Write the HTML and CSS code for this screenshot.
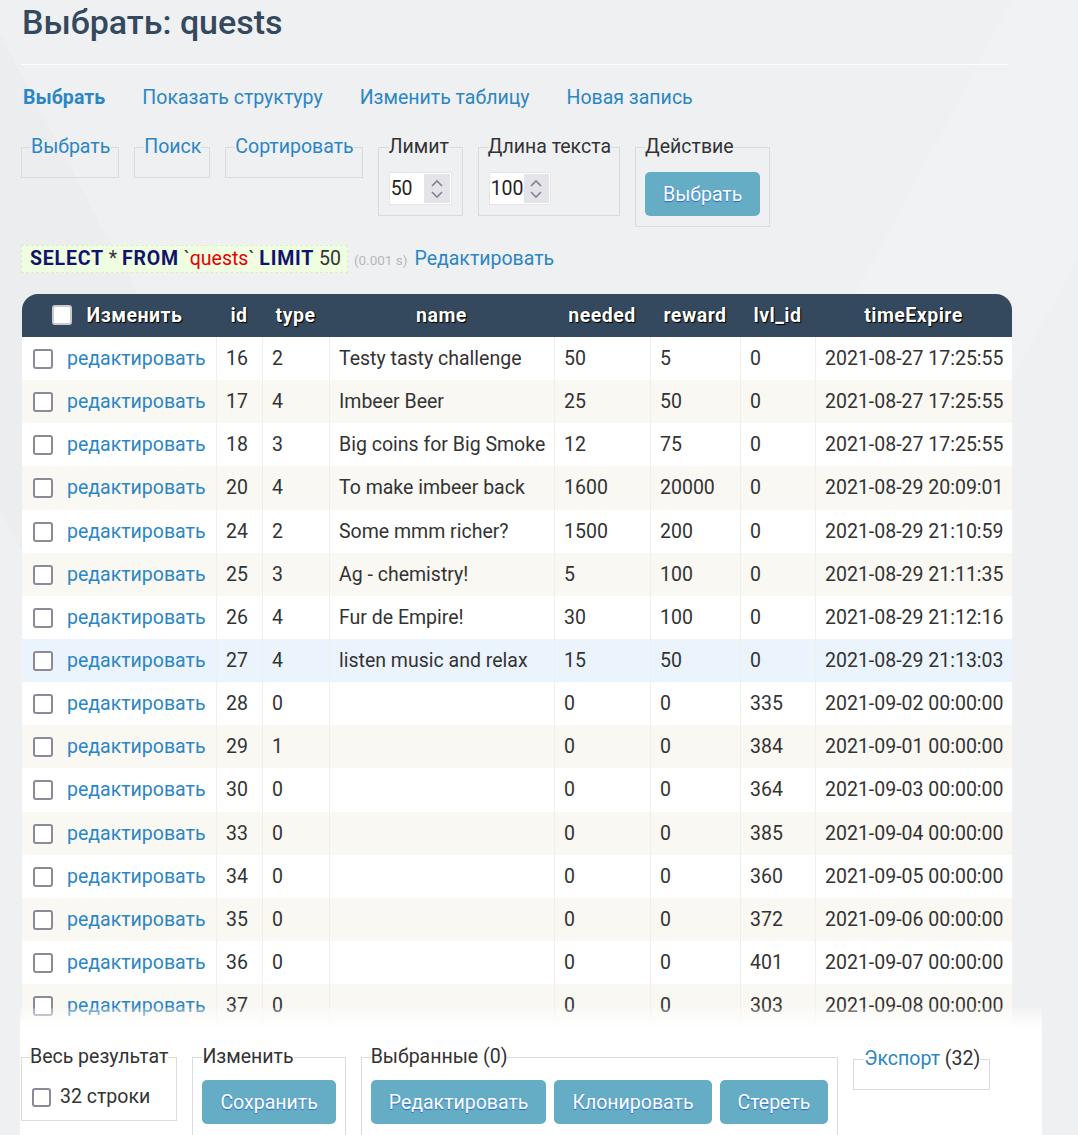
FILE: index.html
```html
<!DOCTYPE html>
<html lang="ru">
<head>
<meta charset="utf-8">
<title>Выбрать: quests</title>
<link rel="stylesheet" href="styles.css">
</head>
<body>
<div class="content">
  <h2 class="title">Выбрать: quests</h2>
  <p class="links">
    <a href="#" class="active">Выбрать</a>
    <a href="#">Показать структуру</a>
    <a href="#">Изменить таблицу</a>
    <a href="#">Новая запись</a>
  </p>
  <form class="select-form">
    <fieldset class="fs fs-empty"><legend><a href="#">Выбрать</a></legend></fieldset>
    <fieldset class="fs fs-empty"><legend><a href="#">Поиск</a></legend></fieldset>
    <fieldset class="fs fs-empty"><legend><a href="#">Сортировать</a></legend></fieldset>
    <fieldset class="fs fs-limit"><legend>Лимит</legend>
      <div class="num num-limit"><span class="num-val">50</span><span class="spin"><svg width="14" height="24" viewBox="0 0 14 24"><path d="M2 9 L7 4 L12 9 M2 15 L7 20 L12 15" fill="none" stroke="#85828f" stroke-width="1.6"/></svg></span></div>
    </fieldset>
    <fieldset class="fs fs-len"><legend>Длина текста</legend>
      <div class="num num-len"><span class="num-val">100</span><span class="spin"><svg width="14" height="24" viewBox="0 0 14 24"><path d="M2 9 L7 4 L12 9 M2 15 L7 20 L12 15" fill="none" stroke="#85828f" stroke-width="1.6"/></svg></span></div>
    </fieldset>
    <fieldset class="fs fs-action"><legend>Действие</legend>
      <button type="button" class="btn">Выбрать</button>
    </fieldset>
  </form>
  <p class="sql-line"><code class="sql"><b class="kw">SELECT</b> * <b class="kw">FROM</b> `<span class="ident">quests</span>` <b class="kw">LIMIT</b> 50</code><span class="time">(0.001 s)</span><a href="#">Редактировать</a></p>

  <table class="data">
    <colgroup>
      <col class="c1"><col class="c2"><col class="c3"><col class="c4"><col class="c5"><col class="c6"><col class="c7"><col class="c8">
    </colgroup>
    <thead>
      <tr><th class="th-first"><span class="cb cb-head"></span>Изменить</th><th>id</th><th>type</th><th>name</th><th>needed</th><th>reward</th><th>lvl_id</th><th>timeExpire</th></tr>
    </thead>
    <tbody>
      <tr><td class="ed"><span class="cb"></span><a href="#">редактировать</a></td><td>16</td><td>2</td><td>Testy tasty challenge</td><td>50</td><td>5</td><td>0</td><td>2021-08-27 17:25:55</td></tr>
      <tr><td class="ed"><span class="cb"></span><a href="#">редактировать</a></td><td>17</td><td>4</td><td>Imbeer Beer</td><td>25</td><td>50</td><td>0</td><td>2021-08-27 17:25:55</td></tr>
      <tr><td class="ed"><span class="cb"></span><a href="#">редактировать</a></td><td>18</td><td>3</td><td>Big coins for Big Smoke</td><td>12</td><td>75</td><td>0</td><td>2021-08-27 17:25:55</td></tr>
      <tr class="tall"><td class="ed"><span class="cb"></span><a href="#">редактировать</a></td><td>20</td><td>4</td><td>To make imbeer back</td><td>1600</td><td>20000</td><td>0</td><td>2021-08-29 20:09:01</td></tr>
      <tr><td class="ed"><span class="cb"></span><a href="#">редактировать</a></td><td>24</td><td>2</td><td>Some mmm richer?</td><td>1500</td><td>200</td><td>0</td><td>2021-08-29 21:10:59</td></tr>
      <tr><td class="ed"><span class="cb"></span><a href="#">редактировать</a></td><td>25</td><td>3</td><td>Ag - chemistry!</td><td>5</td><td>100</td><td>0</td><td>2021-08-29 21:11:35</td></tr>
      <tr><td class="ed"><span class="cb"></span><a href="#">редактировать</a></td><td>26</td><td>4</td><td>Fur de Empire!</td><td>30</td><td>100</td><td>0</td><td>2021-08-29 21:12:16</td></tr>
      <tr class="hover"><td class="ed"><span class="cb"></span><a href="#">редактировать</a></td><td>27</td><td>4</td><td>listen music and relax</td><td>15</td><td>50</td><td>0</td><td>2021-08-29 21:13:03</td></tr>
      <tr><td class="ed"><span class="cb"></span><a href="#">редактировать</a></td><td>28</td><td>0</td><td></td><td>0</td><td>0</td><td>335</td><td>2021-09-02 00:00:00</td></tr>
      <tr><td class="ed"><span class="cb"></span><a href="#">редактировать</a></td><td>29</td><td>1</td><td></td><td>0</td><td>0</td><td>384</td><td>2021-09-01 00:00:00</td></tr>
      <tr class="tall"><td class="ed"><span class="cb"></span><a href="#">редактировать</a></td><td>30</td><td>0</td><td></td><td>0</td><td>0</td><td>364</td><td>2021-09-03 00:00:00</td></tr>
      <tr><td class="ed"><span class="cb"></span><a href="#">редактировать</a></td><td>33</td><td>0</td><td></td><td>0</td><td>0</td><td>385</td><td>2021-09-04 00:00:00</td></tr>
      <tr><td class="ed"><span class="cb"></span><a href="#">редактировать</a></td><td>34</td><td>0</td><td></td><td>0</td><td>0</td><td>360</td><td>2021-09-05 00:00:00</td></tr>
      <tr><td class="ed"><span class="cb"></span><a href="#">редактировать</a></td><td>35</td><td>0</td><td></td><td>0</td><td>0</td><td>372</td><td>2021-09-06 00:00:00</td></tr>
      <tr><td class="ed"><span class="cb"></span><a href="#">редактировать</a></td><td>36</td><td>0</td><td></td><td>0</td><td>0</td><td>401</td><td>2021-09-07 00:00:00</td></tr>
      <tr><td class="ed"><span class="cb"></span><a href="#">редактировать</a></td><td>37</td><td>0</td><td></td><td>0</td><td>0</td><td>303</td><td>2021-09-08 00:00:00</td></tr>
    </tbody>
  </table>

  <div class="footer">
    <div class="footer-row">
      <fieldset class="fs fs-total"><legend>Весь результат</legend>
        <label class="check-label"><span class="cb"></span>32 строки</label>
      </fieldset>
      <fieldset class="fs fs-btns"><legend>Изменить</legend>
        <button type="button" class="btn">Сохранить</button>
      </fieldset>
      <fieldset class="fs fs-btns"><legend>Выбранные (0)</legend>
        <div class="btn-group">
          <button type="button" class="btn">Редактировать</button>
          <button type="button" class="btn">Клонировать</button>
          <button type="button" class="btn">Стереть</button>
        </div>
      </fieldset>
      <fieldset class="fs fs-export"><legend><a href="#">Экспорт</a> (32)</legend></fieldset>
    </div>
  </div>
</div>
</body>
</html>
```
FILE: styles.css
```css
html, body {
  margin: 0;
  padding: 0;
}
body {
  background-color: #eff0f1;
  background-image:
    linear-gradient(118deg, rgba(255,255,255,0) 0 60%, rgba(255,255,255,.12) 60% 72%, rgba(255,255,255,0) 72%),
    linear-gradient(62deg, rgba(0,0,0,0) 0 20%, rgba(0,0,0,.012) 20% 35%, rgba(0,0,0,0) 35%);
  font-family: Roboto, "Noto Sans", "Liberation Sans", sans-serif;
  font-size: 19.5px;
  color: #333;
}
a {
  color: #2b86c5;
  text-decoration: none;
}
.content {
  padding: 0 0 0 21px;
}
.title {
  margin: 0;
  width: 987px;
  padding: 2px 0 22px 1px;
  font-size: 34px;
  font-weight: 500;
  line-height: 40px;
  color: #34495e;
  border-bottom: 1px solid rgba(255,255,255,.85);
}
.links {
  margin: 22px 0 0 2px;
  display: flex;
  gap: 37px;
  line-height: 22px;
}
.links .active {
  font-weight: 700;
  letter-spacing: 0.1px;
}
.select-form {
  display: flex;
  align-items: flex-start;
  gap: 15px;
  margin: 27px 0 0 0;
}
.fs {
  margin: 0;
  border: 1px solid #dadbdc;
  padding: 9px 8px 10px 9px;
  min-width: 0;
}
.fs legend {
  padding: 0;
  line-height: 22px;
  color: #333;
  white-space: nowrap;
}
.fs-limit {
  padding: 9px 10px 10px 10px;
}
.fs-len {
  padding: 9px 8px 10px 9px;
}
.fs-action {
  padding: 9px 9px 10px 9px;
}
.num {
  margin-top: 5px;
  box-sizing: border-box;
  display: flex;
  align-items: center;
  background: #fff;
  border: 1px solid #e6e6e6;
  height: 33px;
  padding: 0 1px;
}
.num-limit { width: 63px; }
.num-len { width: 62px; margin-left: 1px; }
.num-val {
  flex: 1;
  line-height: 22px;
  color: #222;
}
.spin {
  width: 26px;
  height: 29px;
  background: #e4e3e9;
  display: flex;
  align-items: center;
  justify-content: center;
}
.spin svg { display: block; }
.btn {
  font-family: inherit;
  font-size: 19.5px;
  color: #fff;
  background: #64adc4;
  border: 0;
  border-radius: 5px;
  height: 44px;
  padding: 0 18px;
  text-shadow: 0 1px 1px #2b63d6;
  cursor: pointer;
}
.fs .btn { margin-top: 5px; }
.sql-line {
  margin: 18px 0 0 0;
  display: flex;
  align-items: center;
  line-height: 22px;
}
.sql {
  font-family: inherit;
  background: #effde1;
  border: 1px dashed #d9efc4;
  padding: 2px 6px 2px 8px;
  color: #333;
}
.kw {
  color: #13136e;
  letter-spacing: 0.8px;
}
.ident {
  color: #e60000;
}
.time {
  font-size: 13.5px;
  color: #b8b8b8;
  margin: 2px 7px 0 6px;
}
.data {
  margin: 21px 0 0 1px;
  border-collapse: separate;
  border-spacing: 0;
  table-layout: fixed;
  width: 990px;
}
.c1 { width: 194px; }
.c2 { width: 46px; }
.c3 { width: 67px; }
.c4 { width: 225px; }
.c5 { width: 96px; }
.c6 { width: 90px; }
.c7 { width: 75px; }
.c8 { width: 197px; }
.data th {
  background: #34495e;
  color: #fff;
  font-weight: 700;
  letter-spacing: 0.5px;
  text-align: center;
  height: 43px;
  padding: 0 4px;
  white-space: nowrap;
  text-shadow: 1px 1px 1px #000, 0 0 1px #000;
}
.data th:first-child { border-top-left-radius: 16px; }
.data th:last-child { border-top-right-radius: 16px; }
.data th.th-first {
  padding: 0 4px 0 0;
}
.data td {
  padding: 10.5px 4px 10.5px 9px;
  line-height: 22px;
  white-space: nowrap;
  border-left: 1px solid #f0efea;
  background: #fff;
}
.data tr.tall td {
  padding-top: 11px;
  padding-bottom: 11px;
}
.data td:first-child { border-left: 0; }
.data tbody tr:nth-child(even) td { background: #f9f8f3; }
.data tbody tr.hover td { background: #ebf3fd; }
.data td.ed {
  padding-left: 11px;
}
.cb {
  display: inline-block;
  box-sizing: border-box;
  width: 20px;
  height: 20px;
  border: 2.5px solid #8d8a97;
  border-radius: 3px;
  background: #fff;
  vertical-align: -4px;
  margin-right: 14px;
}
.cb-head {
  border: 2px solid #c9cbd0;
  margin-right: 15px;
  vertical-align: -3px;
}
.footer {
  position: relative;
  margin-top: -19px;
  margin-left: -1px;
  width: 1021px;
  background: linear-gradient(rgba(255,255,255,.2), #fff 20px);
  padding: 38px 0 0 1px;
}
.footer-row {
  display: flex;
  align-items: flex-start;
  gap: 15px;
}
.fs-total {
  padding: 18px 8px 12px 8px;
}
.check-label {
  display: flex;
  align-items: center;
  line-height: 22px;
  padding-left: 2px;
}
.check-label .cb {
  width: 19px;
  height: 19px;
  margin-right: 9px;
  vertical-align: 0;
}
.fs-btns {
  padding: 7px 9px 20px 9px;
}
.btn-group {
  display: flex;
  gap: 8px;
  margin-top: 5px;
}
.btn-group .btn { margin-top: 0; }
.fs-export {
  padding: 9px 9px 10px 10px;
  margin-top: 2px;
}
```
